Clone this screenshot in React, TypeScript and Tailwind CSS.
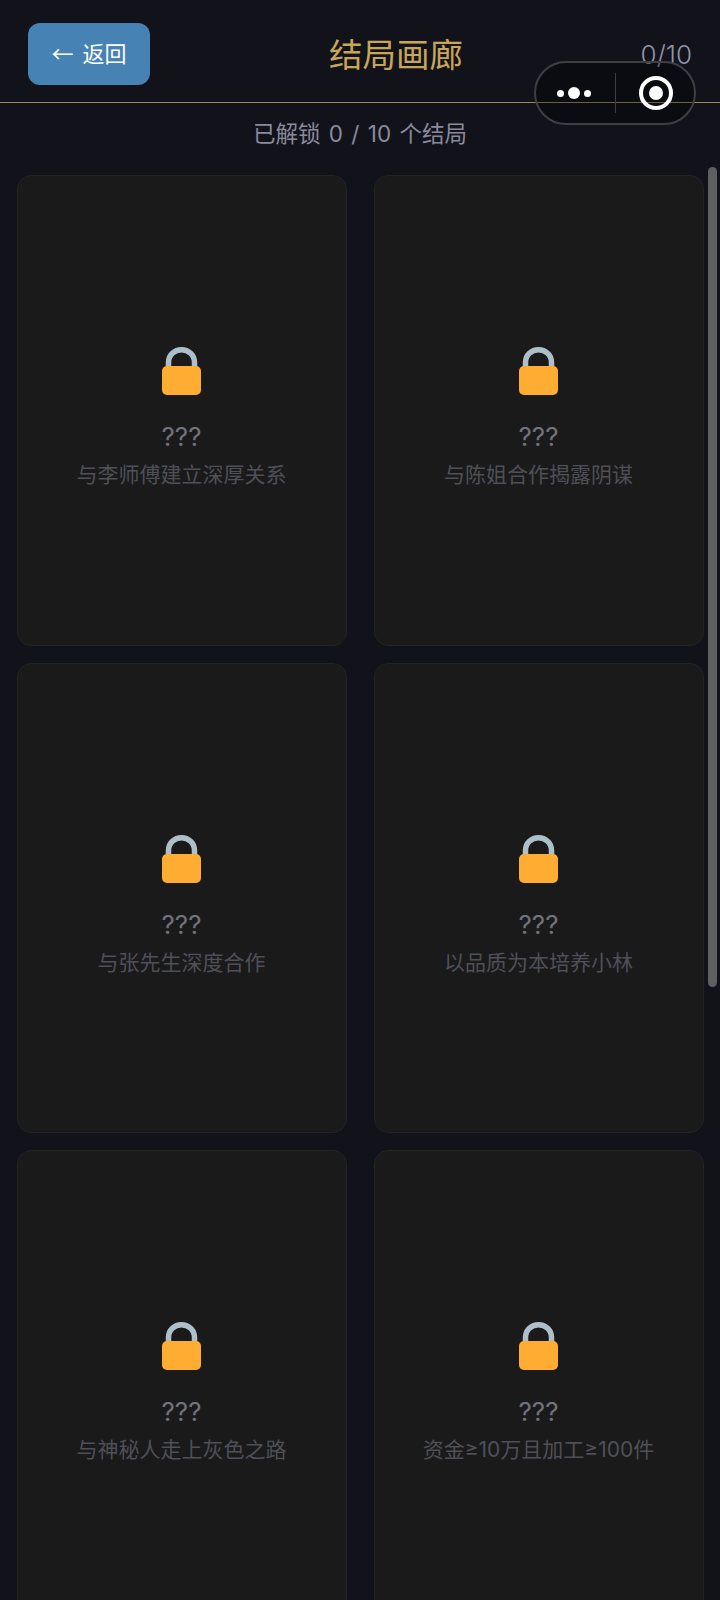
const endings = [
  '与李师傅建立深厚关系',
  '与陈姐合作揭露阴谋',
  '与张先生深度合作',
  '以品质为本培养小林',
  '与神秘人走上灰色之路',
  '资金≥10万且加工≥100件',
];

function LockIcon() {
  return (
    <svg width="39" height="48" viewBox="0 0 39 48" className="block">
      <path d="M6.5 22 V15.5 C6.5 8 12.5 2.75 19.5 2.75 C26.5 2.75 32.5 8 32.5 15.5 V22" fill="none" stroke="#aebfca" strokeWidth="5.5" />
      <rect x="0" y="19" width="39" height="29" rx="5" fill="#ffac33" />
    </svg>
  );
}

function EndingCard({ hint }: { hint: string }) {
  return (
    <div className="h-[470.5px] rounded-[14px] border border-[#242321] bg-[#1a1a1a] flex flex-col items-center pt-[171px]">
      <LockIcon />
      <div className="mt-[24px] text-[26px] leading-[36px] text-[#72727d]">???</div>
      <div className="mt-[5px] text-[21px] leading-[30px] text-[#4f4f58]">{hint}</div>
    </div>
  );
}

export default function App() {
  return (
    <div
      className="relative w-[720px] h-[1600px] overflow-hidden bg-[#11121a]"
      style={{ fontFamily: '"Inter", "Noto Sans CJK SC", sans-serif' }}
    >
      <div className="relative h-[103px] border-b border-[#a08a58] px-[28px] pt-[23px] flex justify-between">
        <button
          className="w-[122px] h-[62px] pb-[3px] rounded-[12px] bg-[#4682b4] text-white text-[22px] [word-spacing:4px] flex items-center justify-center"
          style={{ fontFamily: '"Noto Sans CJK SC", sans-serif' }}
        >
          ← 返回
        </button>
        <div className="absolute left-[329px] top-[33px] text-[33.5px] leading-[44px] text-[#c9a557]">结局画廊</div>
        <div className="pt-[16px] text-[26px] leading-[32px] font-light text-[#9494a6]">0/10</div>
      </div>

      <div className="h-[72px] pt-[15px] text-center text-[22.5px] leading-[32px] text-[#8a8a9c] whitespace-pre [word-spacing:2px]">
        已解锁 0 / 10 个结局
      </div>

      <div className="grid grid-cols-2 gap-x-[27px] gap-y-[17px] px-[16.5px]">
        {endings.map((hint) => (
          <EndingCard key={hint} hint={hint} />
        ))}
      </div>

      {/* scrollbar */}
      <div className="absolute left-[708px] top-[167px] w-[9px] h-[820px] rounded-full bg-[#5f5f62]" />

      {/* mini program capsule */}
      <div className="absolute left-[534px] top-[61px] w-[162px] h-[64px] rounded-full border-2 border-[#3f3f43] bg-black/30 flex items-center">
        <div className="w-[79px] flex items-center justify-center gap-[4px] pr-[3px]">
          <span className="w-[7px] h-[7px] rounded-full bg-white" />
          <span className="w-[12px] h-[12px] rounded-full bg-white" />
          <span className="w-[7px] h-[7px] rounded-full bg-white" />
        </div>
        <div className="w-px h-[40px] bg-[#3f3f43]" />
        <div className="flex-1 flex items-center justify-center pl-[2px]">
          <div className="w-[34px] h-[34px] rounded-full border-[4px] border-white flex items-center justify-center">
            <span className="w-[14px] h-[14px] rounded-full bg-white" />
          </div>
        </div>
      </div>
    </div>
  );
}
